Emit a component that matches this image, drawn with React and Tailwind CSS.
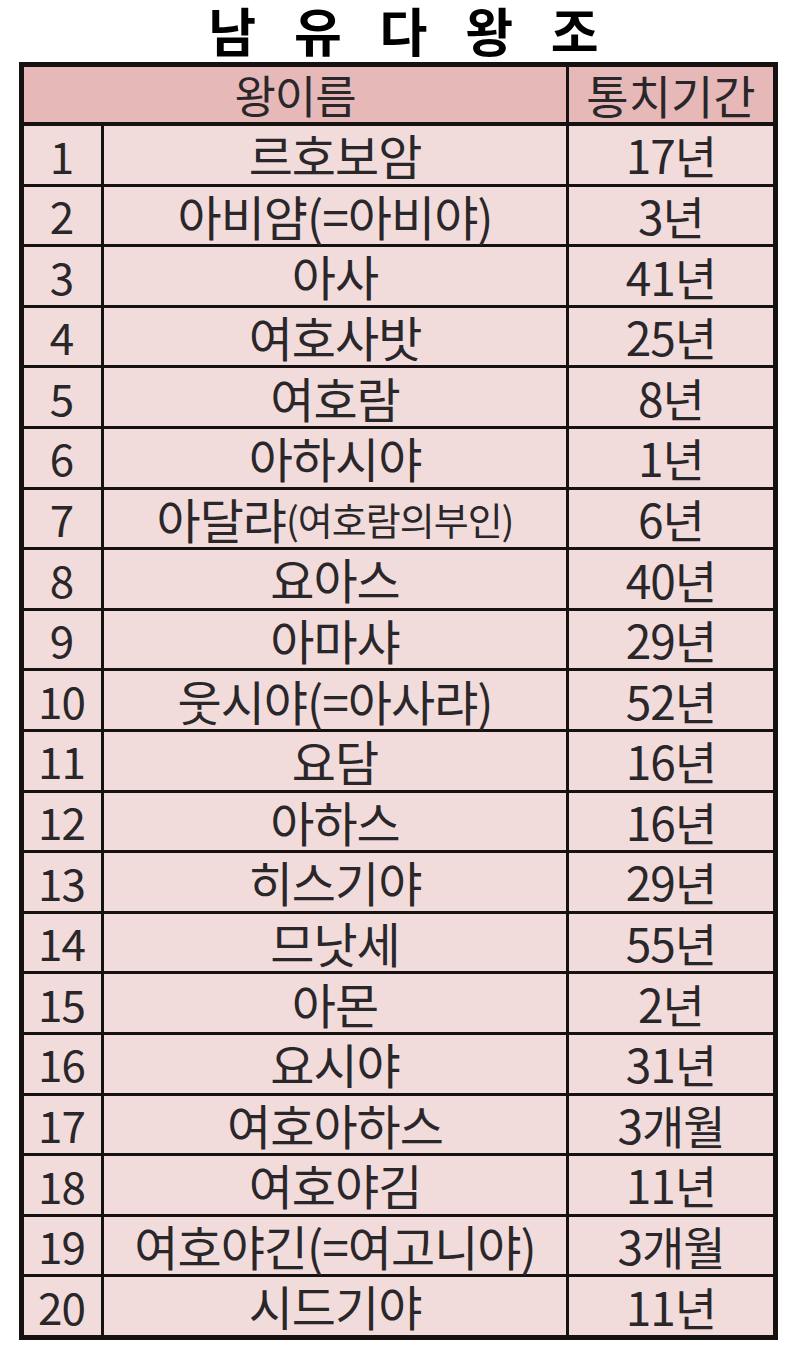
import React from "react";

const rows = [
  ["1", "르호보암", "17년"],
  ["2", "아비얌(=아비야)", "3년"],
  ["3", "아사", "41년"],
  ["4", "여호사밧", "25년"],
  ["5", "여호람", "8년"],
  ["6", "아하시야", "1년"],
  ["7", null, "6년"],
  ["8", "요아스", "40년"],
  ["9", "아마샤", "29년"],
  ["10", "웃시야(=아사랴)", "52년"],
  ["11", "요담", "16년"],
  ["12", "아하스", "16년"],
  ["13", "히스기야", "29년"],
  ["14", "므낫세", "55년"],
  ["15", "아몬", "2년"],
  ["16", "요시야", "31년"],
  ["17", "여호아하스", "3개월"],
  ["18", "여호야김", "11년"],
  ["19", "여호야긴(=여고니야)", "3개월"],
  ["20", "시드기야", "11년"],
];

export default function App() {
  return (
    <div
      className="w-[800px] h-[1363px] bg-white text-[#2a272b]"
      style={{ fontFamily: '"Noto Sans CJK KR", "Noto Sans", sans-serif' }}
    >
      <div className="h-[62px] flex items-center justify-center pb-[2px] pl-[20px]">
        <h1 className="text-[52px] font-bold leading-[1.2] tracking-[13px] text-black whitespace-nowrap">
          남 유 다 왕 조
        </h1>
      </div>
      <div className="ml-[19px] w-[759px] border-[5px] border-[#161212] bg-[#161212] flex flex-col">
        <div className="grid grid-cols-[542px_204px] gap-x-[3px] mb-[4px]">
          <div className="h-[55px] bg-[#e6b8b7] flex items-center justify-center text-[45px] leading-[1.15] tracking-[-1px]">
            왕이름
          </div>
          <div className="h-[55px] bg-[#e6b8b7] flex items-center justify-center text-[46px] leading-[1.15]">
            통치기간
          </div>
        </div>
        <div className="grid grid-cols-[77px_462px_204px] gap-x-[3px] gap-y-[3px]">
          {rows.map(([n, name, period]) => (
            <React.Fragment key={n}>
              <div className="h-[57.6px] bg-[#f2dcdb] flex items-center justify-center text-[44px] leading-[1.15] tracking-[-1px] pr-[2px]">
                {n}
              </div>
              <div className="h-[57.6px] bg-[#f2dcdb] flex items-center justify-center text-[48px] leading-[1.15] tracking-[-1px] whitespace-nowrap">
                {name === null ? (
                  <>
                    아달랴<span className="text-[38px] tracking-[-1px]">(여호람의부인)</span>
                  </>
                ) : (
                  name
                )}
              </div>
              <div className="h-[57.6px] bg-[#f2dcdb] flex items-center justify-center text-[46px] leading-[1.15] tracking-[-1px]">
                {period}
              </div>
            </React.Fragment>
          ))}
        </div>
      </div>
    </div>
  );
}
